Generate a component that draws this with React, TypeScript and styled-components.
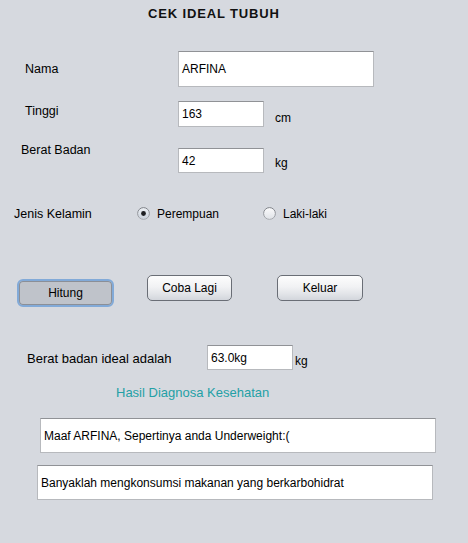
import React from 'react'
import styled, { createGlobalStyle } from 'styled-components'

const GlobalStyle = createGlobalStyle`
  html, body {
    margin: 0;
    padding: 0;
    background: #d6d9df;
  }
`

const Frame = styled.div`
  width: 468px;
  height: 543px;
  background: #d6d9df;
  display: flex;
  flex-direction: column;
  font-family: 'Liberation Sans', Arial, sans-serif;
  color: #000;
  overflow: hidden;
`

const Title = styled.div`
  margin-top: 6px;
  padding-left: 148px;
  font-size: 13px;
  font-weight: bold;
  letter-spacing: 0.85px;
  line-height: 16px;
  color: #111;
`

const Row = styled.div<{ $mt: number; $pl: number; $center?: boolean }>`
  display: flex;
  align-items: ${p => (p.$center ? 'center' : 'flex-start')};
  margin-top: ${p => p.$mt}px;
  padding-left: ${p => p.$pl}px;
`

const Label = styled.span<{ $w?: number; $mt?: number; $size?: number }>`
  display: block;
  flex: none;
  width: ${p => (p.$w ? `${p.$w}px` : 'auto')};
  margin-top: ${p => p.$mt || 0}px;
  font-size: ${p => p.$size || 12.5}px;
  line-height: 16px;
  white-space: nowrap;
`

const Unit = styled.span<{ $ml: number; $mt: number }>`
  margin-left: ${p => p.$ml}px;
  margin-top: ${p => p.$mt}px;
  font-size: 12px;
  line-height: 16px;
`

const Field = styled.div<{ $w: number; $h: number; $mt?: number }>`
  box-sizing: border-box;
  flex: none;
  width: ${p => p.$w}px;
  height: ${p => p.$h}px;
  margin-top: ${p => p.$mt || 0}px;
  background: #fff;
  border: 1px solid #b7b9bd;
  border-top-color: #909296;
  padding-left: 3px;
  display: flex;
  align-items: center;
  font-size: 12px;
  white-space: nowrap;
`

const RadioOption = styled.label<{ $w?: number }>`
  display: flex;
  align-items: flex-start;
  width: ${p => (p.$w ? `${p.$w}px` : 'auto')};
  font-size: 12px;
  line-height: 16px;

  svg {
    flex: none;
    margin-top: 1px;
    margin-right: 7px;
  }
`

const Button = styled.div<{ $w: number; $h: number; $ml?: number; $mt?: number; $pressed?: boolean }>`
  box-sizing: border-box;
  flex: none;
  width: ${p => p.$w}px;
  height: ${p => p.$h}px;
  margin-left: ${p => p.$ml || 0}px;
  margin-top: ${p => p.$mt || 0}px;
  display: flex;
  align-items: center;
  justify-content: center;
  font-size: 12px;
  color: #000;
  border-radius: ${p => (p.$pressed ? 6 : 5)}px;
  border: ${p => (p.$pressed ? '2px solid #82aad8' : '1px solid #6a6e76')};
  box-shadow: ${p => (p.$pressed ? 'inset 0 0 0 1px #8b8f97' : 'none')};
  background: ${p =>
    p.$pressed
      ? '#bfc3ca'
      : 'linear-gradient(to bottom, #fdfdfd 0%, #f1f2f4 45%, #e2e4e8 75%, #d3d6dc 100%)'};
`

const Caption = styled.div`
  margin-top: 15px;
  padding-left: 116px;
  font-size: 13px;
  line-height: 16px;
  color: #24a0a6;
`

const Radio = ({ checked }: { checked?: boolean }) => (
  <svg width="13" height="13" viewBox="0 0 13 13">
    <defs>
      <linearGradient id={checked ? 'rfOn' : 'rfOff'} x1="0" y1="0" x2="0" y2="1">
        <stop offset="0" stopColor={checked ? '#eef1f5' : '#fbfbfc'} />
        <stop offset="1" stopColor={checked ? '#c9d0da' : '#dfe2e7'} />
      </linearGradient>
      <linearGradient id="rStroke" x1="0" y1="0" x2="0" y2="1">
        <stop offset="0" stopColor="#7c7f85" />
        <stop offset="1" stopColor="#a9acb1" />
      </linearGradient>
    </defs>
    <circle cx="6.5" cy="6.5" r="5.9" fill={`url(#${checked ? 'rfOn' : 'rfOff'})`} stroke="url(#rStroke)" strokeWidth="1" />
    {checked && <circle cx="6.5" cy="6.5" r="2.4" fill="#1e1f22" />}
  </svg>
)

export default function App() {
  return (
    <Frame>
      <GlobalStyle />
      <Title>CEK IDEAL TUBUH</Title>

      <Row $mt={29} $pl={25} $center>
        <Label $w={153}>Nama</Label>
        <Field $w={196} $h={36}>ARFINA</Field>
      </Row>

      <Row $mt={14} $pl={25}>
        <Label $w={153} $mt={2}>Tinggi</Label>
        <Field $w={86} $h={26}>163</Field>
        <Unit $ml={11} $mt={9}>cm</Unit>
      </Row>

      <Row $mt={15} $pl={21}>
        <Label $w={157}>Berat Badan</Label>
        <Field $w={86} $h={25} $mt={6}>42</Field>
        <Unit $ml={11} $mt={13}>kg</Unit>
      </Row>

      <Row $mt={33} $pl={14}>
        <Label $w={123}>Jenis Kelamin</Label>
        <RadioOption $w={126}>
          <Radio checked />
          Perempuan
        </RadioOption>
        <RadioOption>
          <Radio />
          Laki-laki
        </RadioOption>
      </Row>

      <Row $mt={53} $pl={17}>
        <Button $w={97} $h={28} $mt={4} $pressed>Hitung</Button>
        <Button $w={85} $h={26} $ml={33}>Coba Lagi</Button>
        <Button $w={86} $h={26} $ml={45}>Keluar</Button>
      </Row>

      <Row $mt={38} $pl={27}>
        <Label $w={180} $mt={6} $size={13}>Berat badan ideal adalah</Label>
        <Field $w={86} $h={25}>63.0kg</Field>
        <Unit $ml={2} $mt={8}>kg</Unit>
      </Row>

      <Caption>Hasil Diagnosa Kesehatan</Caption>

      <Row $mt={17} $pl={40}>
        <Field $w={396} $h={35}>Maaf ARFINA, Sepertinya anda Underweight:(</Field>
      </Row>

      <Row $mt={12} $pl={37}>
        <Field $w={396} $h={35}>Banyaklah mengkonsumsi makanan yang berkarbohidrat</Field>
      </Row>
    </Frame>
  )
}
